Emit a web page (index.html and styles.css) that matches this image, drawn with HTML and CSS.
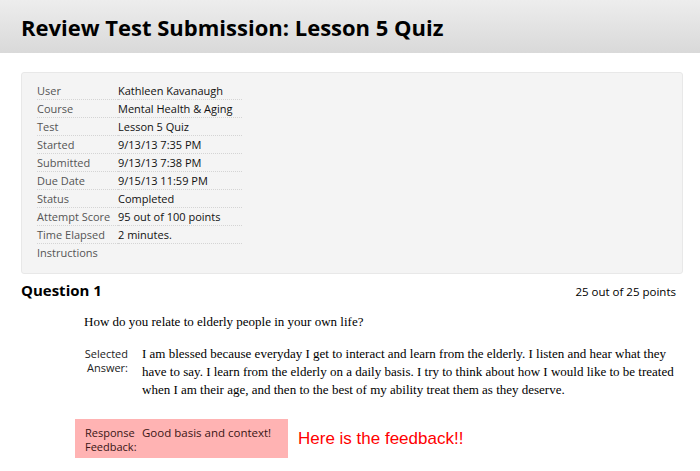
FILE: index.html
```html
<!DOCTYPE html>
<html lang="en">
<head>
  <meta charset="UTF-8" />
  <title>Review Test Submission: Lesson 5 Quiz</title>
  <link rel="stylesheet" href="styles.css">
</head>
<body>
  <header class="page-title">
    <h1>Review Test Submission: Lesson 5 Quiz</h1>
  </header>

  <main>
    <div class="summary-box">
      <table class="summary">
        <tr><th>User</th><td>Kathleen Kavanaugh</td></tr>
        <tr><th>Course</th><td>Mental Health &amp; Aging</td></tr>
        <tr><th>Test</th><td>Lesson 5 Quiz</td></tr>
        <tr><th>Started</th><td>9/13/13 7:35 PM</td></tr>
        <tr><th>Submitted</th><td>9/13/13 7:38 PM</td></tr>
        <tr><th>Due Date</th><td>9/15/13 11:59 PM</td></tr>
        <tr><th>Status</th><td>Completed</td></tr>
        <tr><th>Attempt Score</th><td>95 out of 100 points</td></tr>
        <tr><th>Time Elapsed</th><td>2 minutes.</td></tr>
        <tr><th>Instructions</th><td></td></tr>
      </table>
    </div>

    <div class="question-head">
      <h2>Question 1</h2>
      <span class="points">25 out of 25 points</span>
    </div>

    <div class="question-body">
      <p class="question-text">How do you relate to elderly people in your own life?</p>

      <div class="answer-row">
        <div class="answer-label">Selected<br>Answer:</div>
        <div class="answer-text">I am blessed because everyday I get to interact and learn from the elderly. I listen and hear what they have to say. I learn from the elderly on a daily basis. I try to think about how I would like to be treated when I am their age, and then to the best of my ability treat them as they deserve.</div>
      </div>
    </div>

    <div class="feedback-row">
      <div class="feedback-box">
        <div class="feedback-label">Response<br>Feedback:</div>
        <div class="feedback-text">Good basis and context!</div>
      </div>
      <span class="feedback-note">Here is the feedback!!</span>
    </div>
  </main>
</body>
</html>
```

FILE: styles.css
```css
body {
  margin: 0;
  padding: 0;
  background: #fff;
  color: #000;
  font-family: "Open Sans", "DejaVu Sans", sans-serif;
  font-size: 11px;
}
.page-title {
  height: 53px;
  display: flex;
  align-items: center;
  padding-left: 21px;
  background: linear-gradient(#ededed, #d9d9d9);
}
.page-title h1 {
  margin: 0;
  font-size: 22px;
  font-weight: 700;
  color: #000;
}
.summary-box {
  margin: 19px 17px 0 21px;
  padding: 9px 15px 12px;
  background: #f4f4f4;
  border: 1px solid #e8e8e8;
  border-radius: 3px;
}
.summary {
  border-collapse: collapse;
  width: 205px;
}
.summary th,
.summary td {
  padding: 0;
  height: 17px;
  line-height: 17px;
  text-align: left;
  font-weight: 400;
  white-space: nowrap;
  border-bottom: 1px dotted #d4d4d4;
}
.summary th {
  width: 81px;
  color: #555;
}
.summary td {
  color: #111;
}
.summary tr:last-child th,
.summary tr:last-child td {
  border-bottom: none;
}
.question-head {
  display: flex;
  justify-content: space-between;
  align-items: baseline;
  margin-top: 7px;
  padding: 0 24px 0 21px;
}
.question-head h2 {
  margin: 0;
  font-size: 15px;
  line-height: 18px;
  font-weight: 700;
}
.points {
  font-size: 11.5px;
}
.question-body {
  padding-left: 84px;
}
.question-text {
  margin: 15px 0 0;
  font-family: "Liberation Serif", serif;
  font-size: 13px;
  line-height: 16px;
}
.answer-row {
  display: flex;
  gap: 14px;
  margin-top: 15px;
}
.answer-label {
  width: 44px;
  text-align: right;
  line-height: 14px;
  padding-top: 2px;
  color: #222;
}
.answer-text {
  width: 535px;
  font-family: "Liberation Serif", serif;
  font-size: 13px;
  line-height: 18px;
}
.feedback-row {
  display: flex;
  align-items: center;
  gap: 10px;
  margin: 20px 0 0 75px;
}
.feedback-box {
  display: flex;
  width: 193px;
  padding: 7px 10px 4px;
  background: #ffb3b3;
  color: #3a1515;
}
.feedback-label {
  width: 57px;
  line-height: 14px;
}
.feedback-text {
  font-size: 11.5px;
  line-height: 14px;
}
.feedback-note {
  font-family: "Liberation Sans", Arial, sans-serif;
  font-size: 17px;
  color: #ff0000;
}
```
